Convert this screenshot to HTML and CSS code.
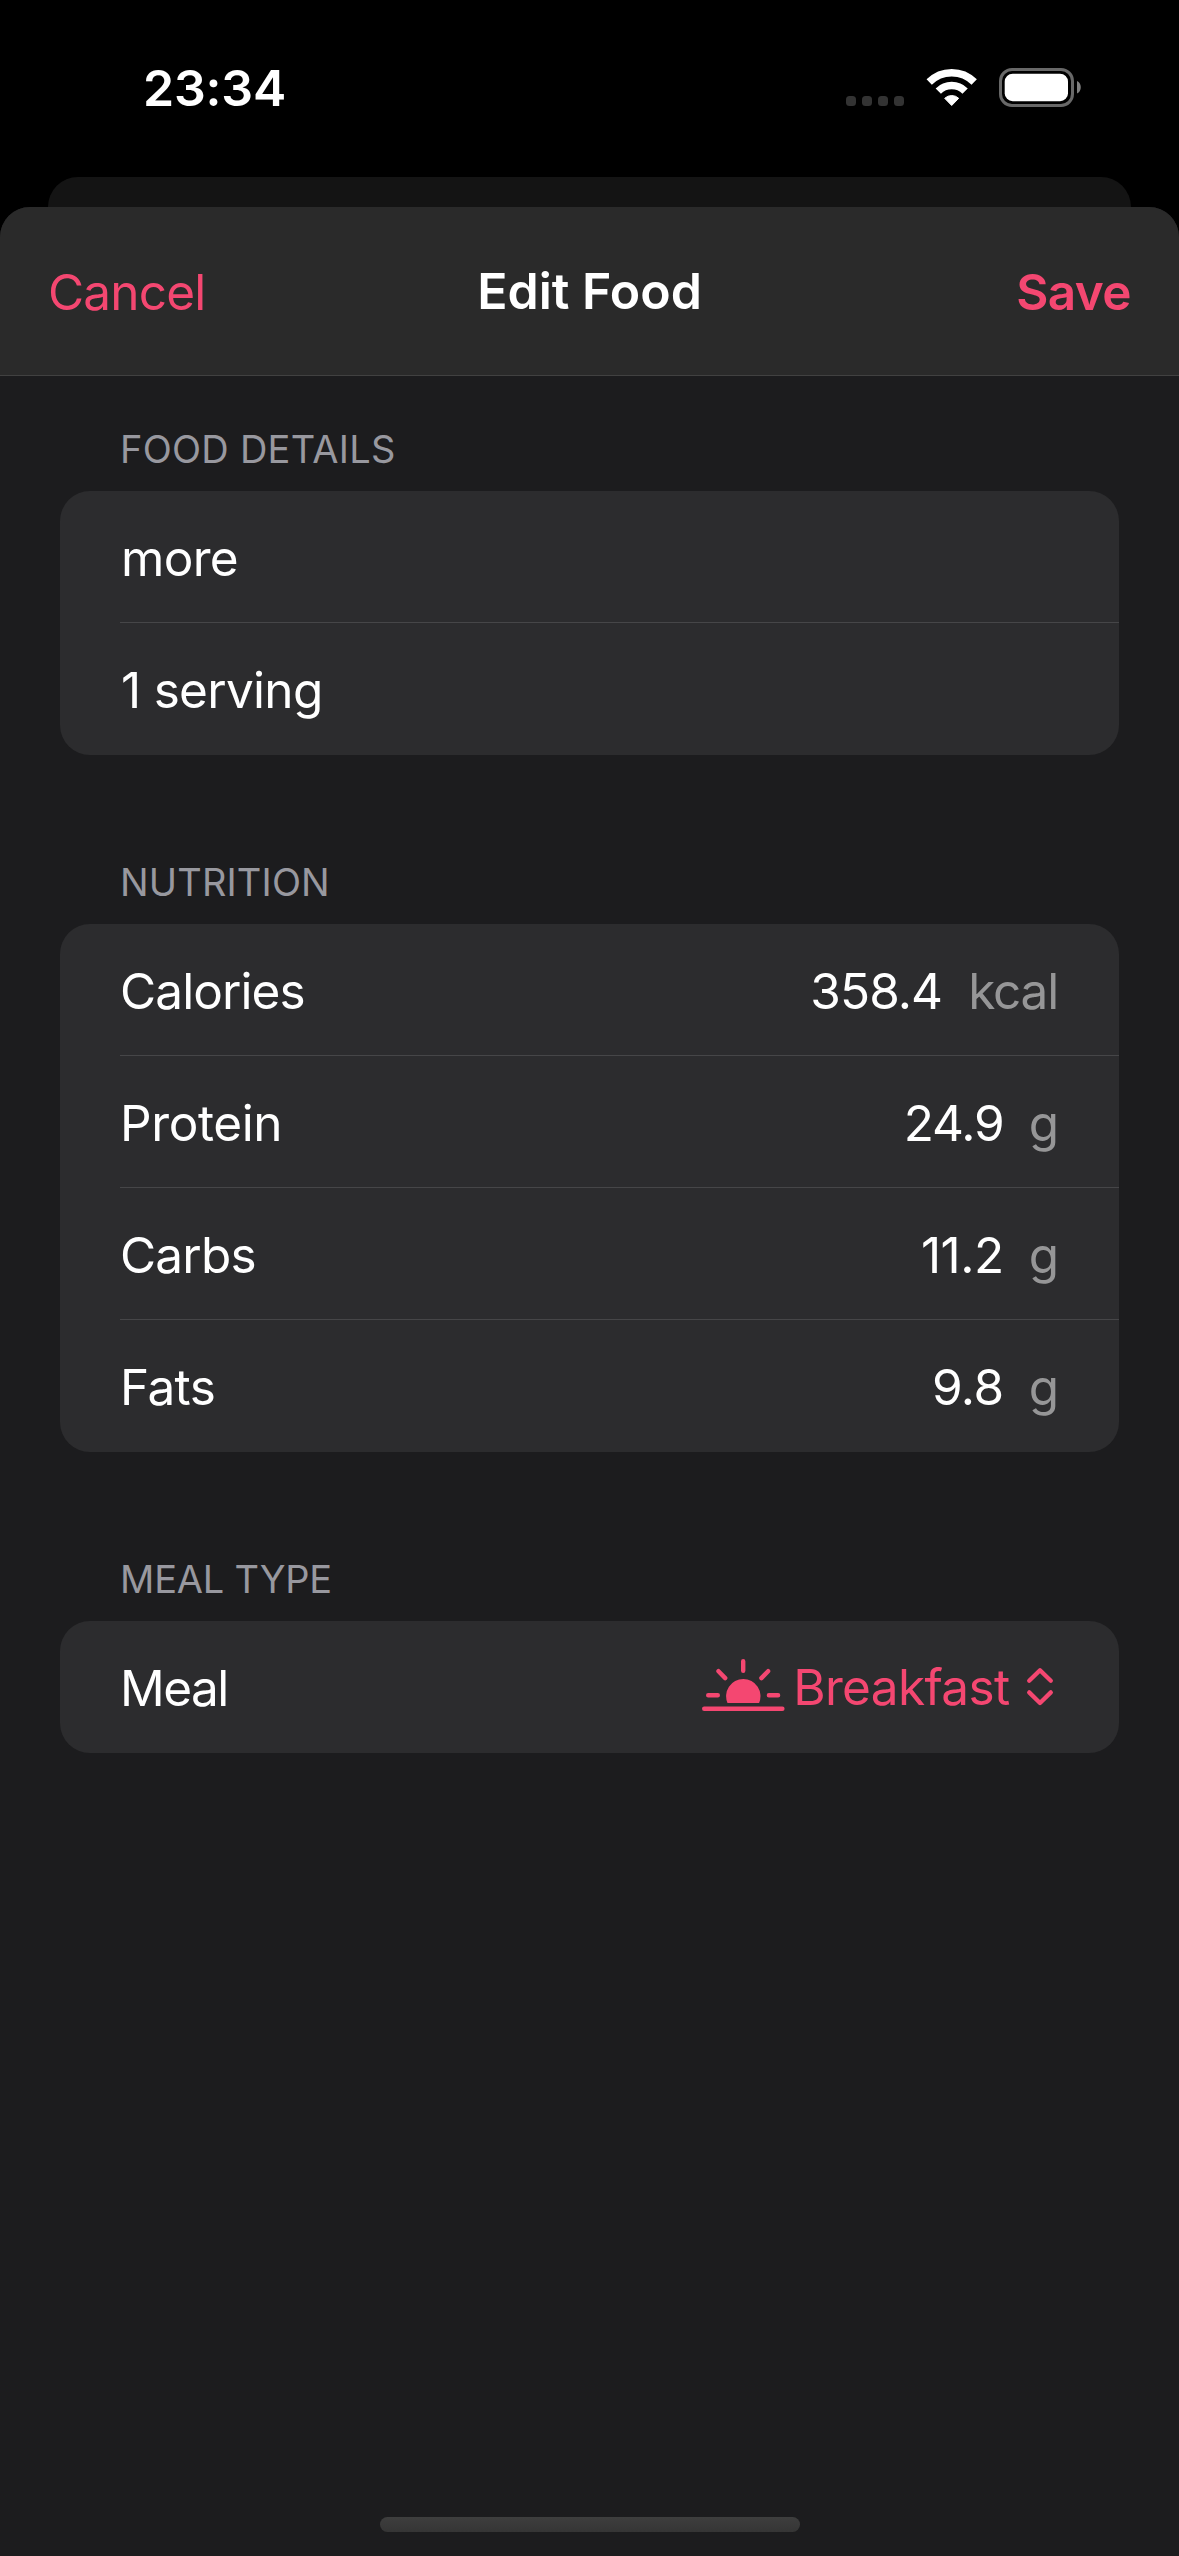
FILE: index.html
```html
<!DOCTYPE html>
<html lang="en">
<head>
<meta charset="utf-8">
<title>Edit Food</title>
<link rel="stylesheet" href="styles.css">
</head>
<body>
<header class="status">
  <time class="clock">23:34</time>
  <div class="indicators">
    <svg class="dots" width="60" height="12" viewBox="0 0 60 12"><rect x="1" y="1" width="10" height="10" rx="3.500"/><rect x="17" y="1" width="10" height="10" rx="3.500"/><rect x="33" y="1" width="10" height="10" rx="3.500"/><rect x="49" y="1" width="10" height="10" rx="3.500"/></svg>
    <svg class="wifi" width="52" height="39" viewBox="0 0 52 39"><path class="wave" d="M3.200 14A31.800 31.800 0 0 1 48.200 14M12.300 23.100A19 19 0 0 1 39.100 23.100"/><path class="wedge" d="M18.700 30.300A10.200 10.200 0 0 1 32.700 30.300L25.700 37.500z"/></svg>
    <svg class="battery" width="83" height="39" viewBox="0 0 83 39"><rect class="shell" x="1.500" y="1.500" width="72" height="36" rx="11.500"/><rect class="charge" x="5.700" y="5.700" width="63.300" height="27.500" rx="8"/><path class="tip" d="M78 13c5 2 5 10.500 0 12.500z"/></svg>
  </div>
</header>
<div class="behind"></div>
<main class="sheet">
  <nav class="bar">
    <button class="action cancel">Cancel</button>
    <h1 class="title">Edit Food</h1>
    <button class="action save">Save</button>
  </nav>
  <section class="group">
    <h2 class="heading details">FOOD DETAILS</h2>
    <div class="card">
      <div class="row"><span class="field">more</span></div>
      <div class="row"><span class="field">1 serving</span></div>
    </div>
  </section>
  <section class="group">
    <h2 class="heading nutrition">NUTRITION</h2>
    <div class="card">
      <div class="row"><span class="label calories">Calories</span><span class="value wide">358.4</span><span class="unit kcal">kcal</span></div>
      <div class="row"><span class="label protein">Protein</span><span class="value">24.9</span><span class="unit">g</span></div>
      <div class="row"><span class="label carbs">Carbs</span><span class="value narrow">11.2</span><span class="unit">g</span></div>
      <div class="row"><span class="label fats">Fats</span><span class="value narrow">9.8</span><span class="unit">g</span></div>
    </div>
  </section>
  <section class="group">
    <h2 class="heading type">MEAL TYPE</h2>
    <div class="card">
      <div class="row"><span class="label meal">Meal</span>
        <svg class="sunrise" width="83" height="54" viewBox="0 0 83 54"><path class="stroke" d="M2.200 50.700H80.400M41.200 3.300V12.800M16.500 13.200l6.700 6.900M66.100 13.200l-6.700 6.900M6.200 37.300H15.800M66.900 37.300H76.100"/><path class="sun" d="M25.500 45A17.200 17.200 0 1 1 57.100 45z"/></svg>
        <span class="choice">Breakfast</span>
        <svg class="chevrons" width="28" height="42" viewBox="0 0 28 42"><path d="M3.200 15.800L14 5.200l10.800 10.600M3.200 27.400L14 38l10.800-10.600"/></svg>
      </div>
    </div>
  </section>
  <div class="home"></div>
</main>
</body>
</html>
```
FILE: styles.css
```css
*{box-sizing:border-box}
body{margin:0;width:1179px;height:2556px;background:#000;color:#fff;font:400 49.5px/60px Inter,sans-serif;display:flex;flex-direction:column;overflow:hidden}
.status{height:177px;flex:none;display:flex;justify-content:space-between;padding:58px 97px 0 143px}
.clock{font-size:50px;line-height:60px;font-weight:600;letter-spacing:-.2px}
.indicators{display:flex;align-items:flex-start;padding-top:10px}
.dots{fill:#333;margin:27px 21px 0 0}
.wifi{margin-right:21px}
.wave{fill:none;stroke:#fff;stroke-width:7.5}
.wedge{fill:#fff;stroke:#fff;stroke-width:1;stroke-linejoin:round}
.shell{fill:none;stroke:#686868;stroke-width:3}
.charge{fill:#fff}
.tip{fill:#808080}
.behind{height:30px;flex:none;margin:0 48px;background:#141414;border-radius:30px 30px 0 0}
.sheet{flex:1;background:#1c1c1e;border-radius:30px 30px 0 0;overflow:hidden;display:flex;flex-direction:column}
.bar{height:169px;flex:none;background:#2a2a2a;border-bottom:1px solid #414141;padding:0 48px;display:grid;grid-template-columns:1fr auto 1fr;align-items:center}
.action{border:0;padding:1px 0 0;background:none;color:#f44771;font:400 49.5px/60px Inter,sans-serif}
.cancel{justify-self:start;letter-spacing:-.8px}
.save{justify-self:end;font-weight:600;letter-spacing:-.6px}
.title{margin:0;padding-bottom:1px;font-size:50px;font-weight:600}
.group{margin:0 60px;flex:none}
.group+.group{margin-top:54px}
.heading{height:115px;margin:0;padding:53px 60px 0;color:#98989f;font-size:38px;line-height:40px;font-weight:400}
.details{letter-spacing:.25px}
.nutrition{letter-spacing:.15px}
.type{letter-spacing:-.2px}
.card{background:#2c2c2e;border-radius:30px}
.row{height:132px;display:flex;align-items:center;padding:2px 60px 0;position:relative}
.row+.row::before{content:"";position:absolute;left:60px;right:0;top:-1px;height:1px;background:#464648}
.field{letter-spacing:-.7px;padding-left:1px}
.label{margin-right:auto}
.calories{letter-spacing:-.9px}
.protein{letter-spacing:-.4px}
.carbs{letter-spacing:-.8px}
.fats{letter-spacing:-.6px}
.meal{letter-spacing:-1.5px}
.value{letter-spacing:-1.1px}
.wide{letter-spacing:-.9px}
.narrow{letter-spacing:-.5px}
.unit{color:#969697;margin-left:25px}
.kcal{letter-spacing:-1.2px;margin:0 1px 0 26px}
.choice,.sunrise,.chevrons{color:#f44771}
.sunrise{margin-bottom:6px}
.stroke{fill:none;stroke:currentColor;stroke-width:4.400;stroke-linecap:round}
.sun{fill:currentColor}
.choice{margin:0 16.5px 2px 8px;letter-spacing:-.65px}
.chevrons{fill:none;stroke:currentColor;stroke-width:4.300;stroke-linecap:round;stroke-linejoin:round;margin:0 5px 4px 0}
.home{width:420px;height:15px;margin:auto auto 24px;border-radius:8px;background:linear-gradient(#3e3e3e,#353535)}
```
